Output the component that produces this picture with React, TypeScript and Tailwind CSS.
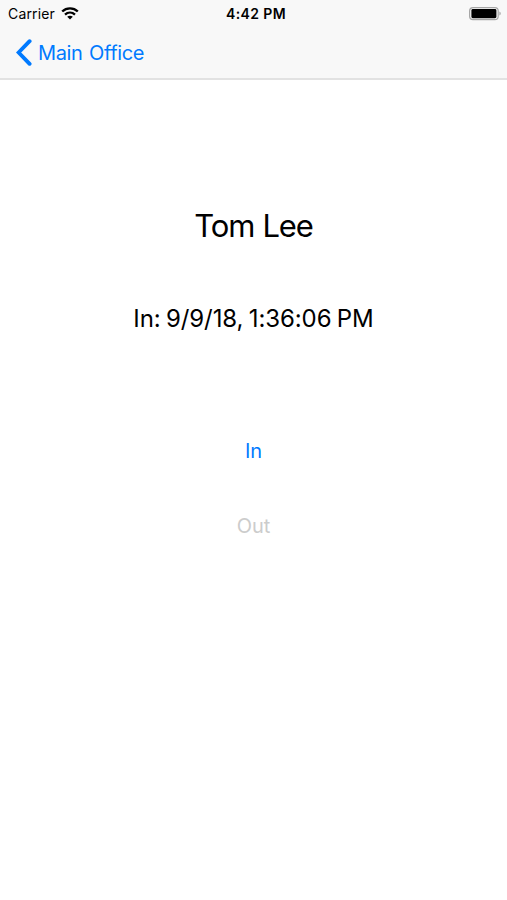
const BackChevron = () => (
  <svg width="16" height="27" viewBox="0 0 16 27" fill="none" className="shrink-0">
    <path d="M13.6 2.2L2.6 13.5L13.6 24.8" stroke="#007aff" strokeWidth="3.9" strokeLinecap="round" />
  </svg>
)

const WifiIcon = () => (
  <svg width="18" height="13" viewBox="0 0 18 13" fill="none" stroke="#000" className="shrink-0">
    <path d="M1.2 4.5C5.6 0.3 12.4 0.3 16.8 4.5" strokeWidth="2.4" />
    <path d="M4 7.6C6.9 4.9 11.1 4.9 14 7.6" strokeWidth="2.3" />
    <path d="M9 12.6L6.2 9.8C7.8 8.4 10.2 8.4 11.8 9.8Z" fill="#000" stroke="none" />
  </svg>
)

const BatteryIcon = () => (
  <svg width="33" height="14" viewBox="0 0 33 14" className="shrink-0">
    <rect x="0.6" y="0.6" width="28.6" height="12" rx="3.4" fill="none" stroke="#a6a6a6" strokeWidth="1.2" />
    <rect x="2.4" y="2" width="25" height="9.2" rx="1.4" fill="#000" />
    <path d="M30.4 4.6C32.2 5.2 32.2 8 30.4 8.6Z" fill="#a6a6a6" />
  </svg>
)

export default function App() {
  return (
    <div className="flex h-[900px] w-[507px] flex-col overflow-hidden bg-white font-[Inter,sans-serif] text-black">
      {/* Status bar and navigation */}
      <header className="h-[80px] border-b-2 border-[#e2e2e2] bg-[#f8f8f8]">
        <div className="grid h-[27px] grid-cols-3 items-center">
          <div className="flex items-center gap-[6px] pl-2">
            <span className="text-[14px] leading-none tracking-[0.15px]">Carrier</span>
            <WifiIcon />
          </div>
          <span className="pl-[5px] text-center text-[14px] leading-none font-semibold tracking-[0.4px]">4:42 PM</span>
          <div className="flex justify-end pr-[5px]">
            <BatteryIcon />
          </div>
        </div>
        <button className="flex h-[51px] items-center gap-[6px] pl-4 text-[#007aff]">
          <BackChevron />
          <span className="pt-px text-[20px] leading-[22px] tracking-[-0.4px] [word-spacing:1.5px]">Main Office</span>
        </button>
      </header>

      <main className="flex flex-col items-center">
        <h1 className="mt-[125px] text-[31px] leading-[42px] tracking-[-1.1px] [word-spacing:0.5px]">Tom Lee</h1>
        <p className="mt-[57px] text-[24px] leading-[30px] tracking-[-0.1px] [word-spacing:-1.2px]">
          In: 9/9/18, 1:36:06 PM
        </p>
        <button className="mt-[104px] text-[20px] leading-[26px] text-[#007aff]">In</button>
        <button className="mt-[49px] text-[20px] leading-[26px] text-[#cccccc]">Out</button>
      </main>
    </div>
  )
}
